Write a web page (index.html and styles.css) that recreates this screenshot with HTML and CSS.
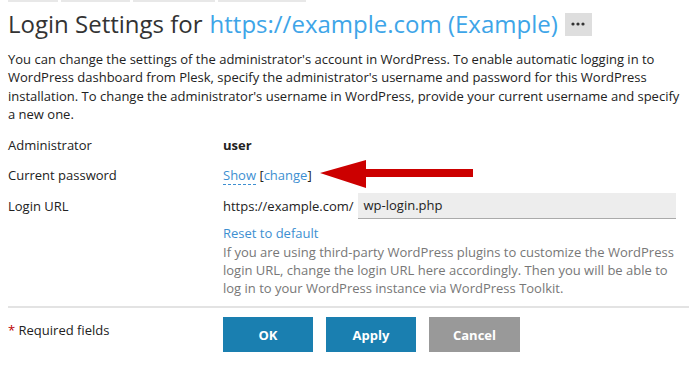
FILE: index.html
```html
<!DOCTYPE html>
<html>
<head>
<meta charset="utf-8">
<link rel="stylesheet" href="styles.css">
</head>
<body>
<div class="tabs">
  <span class="tab t1"></span><span class="tab t2"></span><span class="tab t3"></span><span class="tab t4"></span>
</div>
<h1 class="title">Login Settings for <a class="title-link">https://example.com (Example)</a> <span class="more"><svg width="14" height="4" viewBox="0 0 14 4"><circle cx="2" cy="2" r="1.6" fill="#333"/><circle cx="7" cy="2" r="1.6" fill="#333"/><circle cx="12" cy="2" r="1.6" fill="#333"/></svg></span></h1>
<p class="intro">You can change the settings of the administrator's account in WordPress. To enable automatic logging in to WordPress dashboard from Plesk, specify the administrator's username and password for this WordPress installation. To change the administrator's username in WordPress, provide your current username and specify a new one.</p>
<div class="form">
  <div class="row">
    <div class="label">Administrator</div>
    <div class="value"><b>user</b></div>
  </div>
  <div class="row">
    <div class="label">Current password</div>
    <div class="value pw"><a class="show">Show</a> [<a class="link">change</a>]
      <svg class="arrow" width="160" height="30" viewBox="0 0 160 30"><polygon points="0,13 46,0 46,9 153,9 153,17 46,17 46,28" fill="#cc0000"/></svg>
    </div>
  </div>
  <div class="row url-row">
    <div class="label">Login URL</div>
    <div class="value">
      <div class="url-line"><span class="prefix">https://example.com/</span><div class="input">wp-login.php</div></div>
      <a class="link reset">Reset to default</a>
      <div class="hint">If you are using third-party WordPress plugins to customize the WordPress login URL, change the login URL here accordingly. Then you will be able to log in to your WordPress instance via WordPress Toolkit.</div>
    </div>
  </div>
</div>
<div class="footer">
  <div class="req"><span class="star">*</span> Required fields</div>
  <div class="buttons">
    <button class="btn primary">OK</button>
    <button class="btn primary">Apply</button>
    <button class="btn cancel">Cancel</button>
  </div>
</div>
</body>
</html>
```
FILE: styles.css
```css
body {
  margin: 0 8px;
  font-family: "Open Sans", sans-serif;
  font-size: 13px;
  color: #222;
  background: #fff;
}
.tabs {
  display: flex;
  gap: 3px;
  height: 2px;
}
.tab {
  background: #e8e8e8;
  height: 2px;
}
.t1 { width: 50px; }
.t2 { width: 69px; }
.t3 { width: 82px; }
.t4 { width: 88px; }
.title {
  margin: 7px 0 0;
  font-size: 24px;
  font-weight: 400;
  line-height: 30px;
  color: #333;
  display: flex;
  align-items: center;
}
.title-link {
  color: #3ea5e8;
  margin-left: 7px;
}
.more {
  display: flex;
  align-items: center;
  justify-content: center;
  background: #dedede;
  width: 27px;
  height: 23px;
  margin-left: 7px;
}
.intro {
  margin: 11px 0 0;
  line-height: 18.3px;
  color: #222;
}
.form {
  margin-top: 7px;
}
.row {
  display: flex;
  min-height: 30px;
  line-height: 18px;
  padding-top: 6px;
  box-sizing: border-box;
}
.label {
  width: 215px;
  flex: none;
}
.value {
  flex: 1;
}
.pw {
  position: relative;
  color: #222;
}
.show {
  color: #3d8fd1;
  border-bottom: 1px dashed #3d8fd1;
}
.link {
  color: #3d8fd1;
}
.arrow {
  position: absolute;
  left: 97px;
  top: -6px;
}
.url-row {
  padding-top: 0;
  margin-top: 3px;
}
.url-row .label {
  line-height: 26px;
}
.url-line {
  display: flex;
  align-items: center;
}
.prefix {
  margin-right: 4px;
}
.input {
  width: 312px;
  height: 25px;
  background: #ededed;
  border-bottom: 1px solid #aaa;
  line-height: 25px;
  padding-left: 6px;
  color: #222;
}
.reset {
  display: block;
  margin-top: 5px;
}
.hint {
  color: #777;
  line-height: 18px;
  margin-top: 1px;
  margin-right: 10px;
}
.footer {
  border-top: 2px solid #e3e3e3;
  margin-top: 9px;
  padding-top: 9px;
  display: flex;
}
.req {
  width: 215px;
  flex: none;
  line-height: 18px;
  padding-top: 4px;
}
.star {
  color: #b00;
}
.buttons {
  display: flex;
  gap: 13px;
}
.btn {
  width: 90px;
  height: 35px;
  border: none;
  font-family: "Open Sans", sans-serif;
  font-size: 13px;
  font-weight: 700;
  color: #fff;
  padding: 0;
}
.primary { background: #1a7fb0; }
.cancel { background: #999; width: 91px; }
```
